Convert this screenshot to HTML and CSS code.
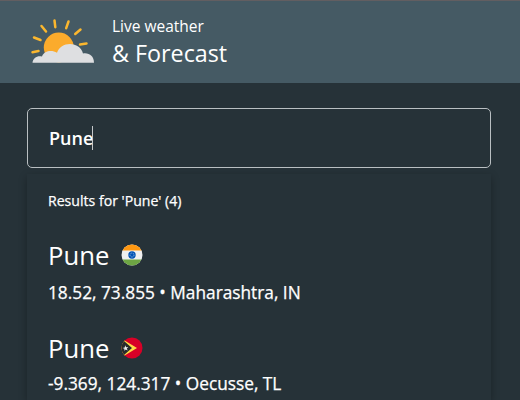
FILE: index.html
```html
<!DOCTYPE html>
<html lang="en">
<head>
<meta charset="utf-8">
<title>Live weather &amp; Forecast</title>
<link rel="stylesheet" href="styles.css">
</head>
<body>
<header class="header">
  <svg class="logo" width="66" height="46" viewBox="0 0 66 46">
    <g stroke="#fbb72e" stroke-width="2.5" stroke-linecap="round">
      <path d="M2.500 34.200 8.500 33M4 19.500 10.500 22M11.500 8 16 13.500M24.500 2.500 25.300 9.200M38.500 3.500 36.200 10.200M50.500 11.500 45.200 16M56.500 25.500 50 26.500"/>
    </g>
    <circle cx="28.800" cy="29.500" r="15" fill="#fbab2c"/>
    <path d="M2.500 44.800C3 40 7 37.500 12 38.500C13.500 34.500 17 33 20.500 33C23 33 25 33.500 27 34.800C29 29 34 26 40 26C46 26 51.500 29.500 53 35.500C59 34.500 64 38 64 44.800Z" fill="#dedfe1"/>
  </svg>
  <div class="brand">
    <div class="brand-small">Live weather</div>
    <div class="brand-large">&amp; Forecast</div>
  </div>
</header>
<main class="main">
  <div class="search"><span>Pune</span><i class="caret"></i></div>
  <section class="results">
    <p class="summary">Results for 'Pune' (4)</p>
    <article class="result">
      <h2 class="city"><span>Pune</span>
        <svg class="flag" width="22" height="22" viewBox="0 0 22 22">
          <clipPath id="round-in"><circle cx="11" cy="11" r="10.500"/></clipPath>
          <g clip-path="url(#round-in)">
            <path fill="#f0f0f0" d="M0 0h22v22H0z"/>
            <path fill="#ff9811" d="M0 0h22v6.500H0z"/>
            <path fill="#6da544" d="M0 15.500h22V22H0z"/>
          </g>
          <circle cx="11" cy="11" r="3.700" fill="#0052b4"/>
          <circle cx="11" cy="11" r="2" fill="none" stroke="#dce7f5" stroke-width=".7" stroke-dasharray=".8 .77"/>
        </svg>
      </h2>
      <p class="place">18.52, 73.855 • Maharashtra, IN</p>
    </article>
    <article class="result">
      <h2 class="city"><span>Pune</span>
        <svg class="flag" width="22" height="22" viewBox="0 0 22 22">
          <clipPath id="round-tl"><circle cx="11" cy="11" r="10.500"/></clipPath>
          <g clip-path="url(#round-tl)">
            <path fill="#d80027" d="M0 0h22v22H0z"/>
            <path fill="#ffda44" d="M0 0 3.600 3.600 16 11 3.600 18.400 0 22z"/>
            <path fill="#282b2c" d="M0 0 3 4 11 11 3 18 0 22z"/>
          </g>
          <path fill="#f0f0f0" d="M4.200 8.200 5.100 10.200 7.300 10 5.800 11.500 6.700 13.500 4.800 12.500 3.200 13.800 3.500 11.800 1.600 10.900 3.700 10.500z"/>
        </svg>
      </h2>
      <p class="place">-9.369, 124.317 • Oecusse, TL</p>
    </article>
  </section>
</main>
</body>
</html>
```
FILE: styles.css
```css
* { box-sizing: border-box; }
body {
  display: flex;
  flex-direction: column;
  margin: 0;
  height: 400px;
  overflow: hidden;
  background: #263238;
  color: #fff;
  font-family: "Open Sans", "Noto Sans", sans-serif;
}
.header {
  display: flex;
  flex: none;
  height: 83px;
  padding: 14px 0 0 30px;
  gap: 16px;
  background: #455a64;
  border-top: 1px solid #625e61;
}
.logo { flex: none; margin-top: 3px; }
.brand { white-space: nowrap; }
.brand-small { font-size: 15.5px; line-height: 22px; }
.brand-large { font-size: 23.3px; line-height: 32px; }
.main {
  display: flex;
  flex: 1;
  flex-direction: column;
  min-height: 0;
  padding: 25px 29px 0 27px;
}
.search {
  display: flex;
  flex: none;
  align-items: center;
  height: 60px;
  padding: 0 0 0 21px;
  border: 1px solid #b9bfc2;
  border-radius: 5px;
  font-size: 18px;
  font-weight: 600;
}
.search span { margin-right: -1px; }
.caret { width: 1px; height: 24px; background: #c4c8ca; }
.results {
  flex: 1;
  min-height: 0;
  margin-top: 6px;
  padding: 16px 21px 0;
  background: #263238;
  box-shadow: 0 3px 8px rgba(0, 0, 0, .3);
}
.summary,
.place { -webkit-text-stroke: .25px #fff; }
.summary { margin: 0 0 27px; font-size: 14.1px; line-height: 22px; }
.result + .result { margin-top: 27px; }
.city {
  display: flex;
  align-items: center;
  gap: 12px;
  margin: 0;
  font-size: 25.7px;
  font-weight: 400;
  line-height: 34px;
}
.flag { margin-top: -2px; }
.place { margin: 8px 0 0; font-size: 17.27px; line-height: 24px; white-space: nowrap; }
.result + .result .place { margin-top: 6px; }
```
